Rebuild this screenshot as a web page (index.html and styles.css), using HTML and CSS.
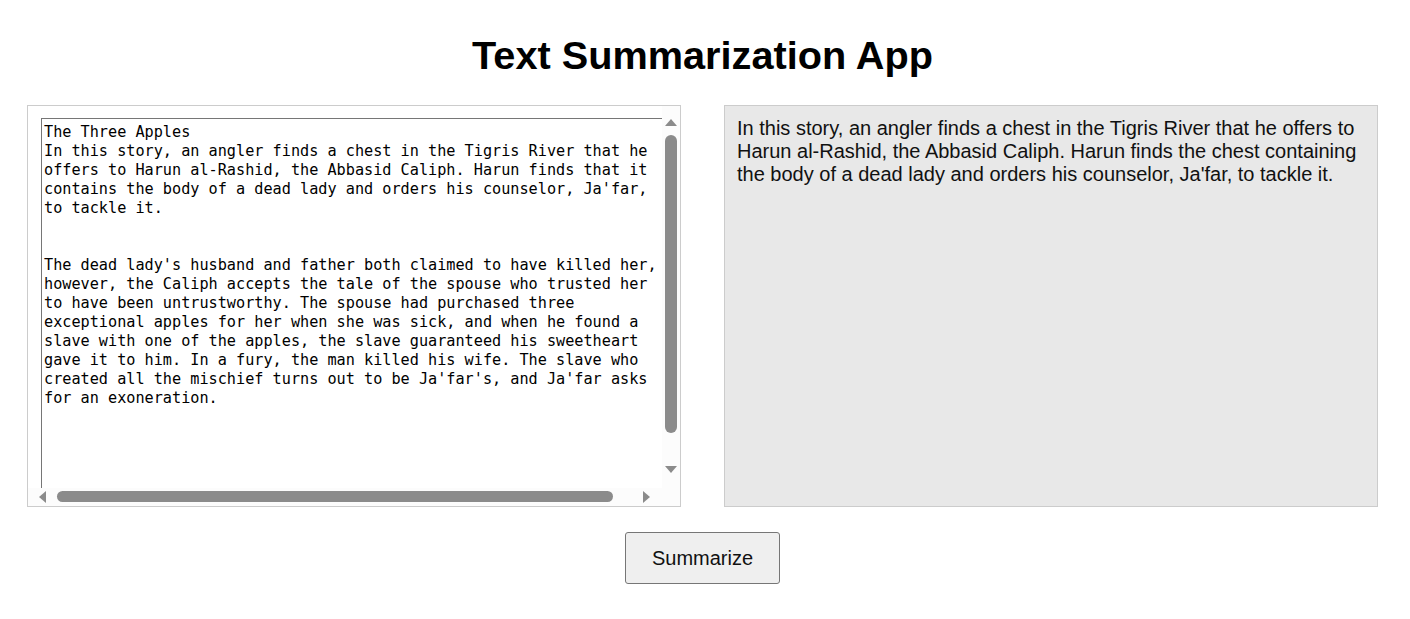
FILE: index.html
```html
<!DOCTYPE html>
<html lang="en">
<head>
<meta charset="utf-8">
<title>Text Summarization App</title>
<link rel="stylesheet" href="styles.css">
</head>
<body>
<main class="app">
  <h1 class="title">Text Summarization App</h1>
  <div class="panels">
    <div class="input-box">
      <div class="viewport">
        <textarea class="input-text" spellcheck="false">The Three Apples
In this story, an angler finds a chest in the Tigris River that he offers to Harun al-Rashid, the Abbasid Caliph. Harun finds that it contains the body of a dead lady and orders his counselor, Ja'far, to tackle it.


The dead lady's husband and father both claimed to have killed her, however, the Caliph accepts the tale of the spouse who trusted her to have been untrustworthy. The spouse had purchased three exceptional apples for her when she was sick, and when he found a slave with one of the apples, the slave guaranteed his sweetheart gave it to him. In a fury, the man killed his wife. The slave who created all the mischief turns out to be Ja'far's, and Ja'far asks for an exoneration.</textarea>
      </div>
      <div class="vbar">
        <div class="sb-btn sb-up">
          <svg width="12" height="7" viewBox="0 0 12 7"><path d="M0 7L6 0L12 7Z" fill="#8b8b8b"/></svg>
        </div>
        <div class="vtrack"><div class="vthumb"></div></div>
        <div class="sb-btn sb-down">
          <svg width="12" height="7" viewBox="0 0 12 7"><path d="M0 0L6 7L12 0Z" fill="#8b8b8b"/></svg>
        </div>
      </div>
      <div class="hbar">
        <div class="sb-btn sb-left">
          <svg width="7" height="12" viewBox="0 0 7 12"><path d="M7 0L0 6L7 12Z" fill="#8b8b8b"/></svg>
        </div>
        <div class="htrack"><div class="hthumb"></div></div>
        <div class="sb-btn sb-right">
          <svg width="7" height="12" viewBox="0 0 7 12"><path d="M0 0L7 6L0 12Z" fill="#8b8b8b"/></svg>
        </div>
      </div>
      <div class="corner"></div>
    </div>
    <div class="summary-box">In this story, an angler finds a chest in the Tigris River that he offers to Harun al-Rashid, the Abbasid Caliph. Harun finds the chest containing the body of a dead lady and orders his counselor, Ja'far, to tackle it.</div>
  </div>
  <div class="actions">
    <button class="summarize-btn" type="button">Summarize</button>
  </div>
</main>
</body>
</html>
```

FILE: styles.css
```css
html, body {
  margin: 0;
  padding: 0;
  background: #ffffff;
}

body {
  font-family: "Liberation Sans", Arial, sans-serif;
  color: #000;
}

.app {
  width: 1351px;
  margin-left: 27px;
  display: flex;
  flex-direction: column;
  align-items: center;
}

.title {
  margin: 32px 0 27px 0;
  font-size: 39.7px;
  font-weight: bold;
  line-height: 46px;
}

.panels {
  width: 100%;
  display: flex;
  justify-content: space-between;
}

/* input panel with its scroll bars */
.input-box {
  width: 654px;
  height: 402px;
  box-sizing: border-box;
  border: 1px solid #cccccc;
  background: #ffffff;
  display: grid;
  grid-template-columns: 634px 18px;
  grid-template-rows: 382px 18px;
}

.viewport {
  overflow: hidden;
  padding: 12px 0 0 13px;
  box-sizing: border-box;
}

.input-text {
  display: block;
  width: 644px;
  height: 403px;
  box-sizing: border-box;
  margin: 0;
  padding: 4px 24px 2px 2px;
  border: 1px solid #767676;
  font-family: "DejaVu Sans Mono", "Liberation Mono", monospace;
  font-size: 15.2px;
  line-height: 19px;
  color: #000;
  background: #fff;
  resize: none;
  outline: none;
  overflow: hidden;
}

.vbar {
  display: flex;
  flex-direction: column;
  background: #fcfcfc;
}

.hbar {
  display: flex;
  flex-direction: row;
  background: #fcfcfc;
}

.corner {
  background: #fcfcfc;
}

.sb-btn {
  display: flex;
  align-items: center;
  justify-content: center;
  flex: 0 0 auto;
}

.sb-btn svg {
  display: block;
}

.sb-up {
  height: 29px;
  padding-top: 3px;
  box-sizing: border-box;
}

.sb-down {
  height: 29px;
  padding-bottom: 8px;
  margin-top: auto;
  box-sizing: border-box;
}

.vtrack {
  flex: 1 1 auto;
  display: flex;
  flex-direction: column;
}

.vthumb {
  width: 12px;
  height: 298px;
  margin-left: 3px;
  border-radius: 6px;
  background: #8b8b8b;
}

.sb-left {
  width: 29px;
  padding-left: 0;
  box-sizing: border-box;
}

.sb-right {
  width: 29px;
  padding-right: 3px;
  box-sizing: border-box;
}

.htrack {
  flex: 1 1 auto;
  display: flex;
}

.hthumb {
  width: 556px;
  height: 11px;
  margin-top: 3px;
  border-radius: 6px;
  background: #8b8b8b;
}

/* summary panel */
.summary-box {
  width: 654px;
  height: 402px;
  box-sizing: border-box;
  border: 1px solid #cccccc;
  background: #e8e8e8;
  padding: 11px 12px;
  font-size: 20px;
  line-height: 23px;
  color: #111;
}

.actions {
  margin-top: 25px;
  display: flex;
  justify-content: center;
}

.summarize-btn {
  width: 155px;
  height: 52px;
  box-sizing: border-box;
  border: 1px solid #767676;
  border-radius: 3px;
  background: #efefef;
  font-family: "Liberation Sans", Arial, sans-serif;
  font-size: 20px;
  color: #111;
  padding: 0;
  cursor: pointer;
}
```
